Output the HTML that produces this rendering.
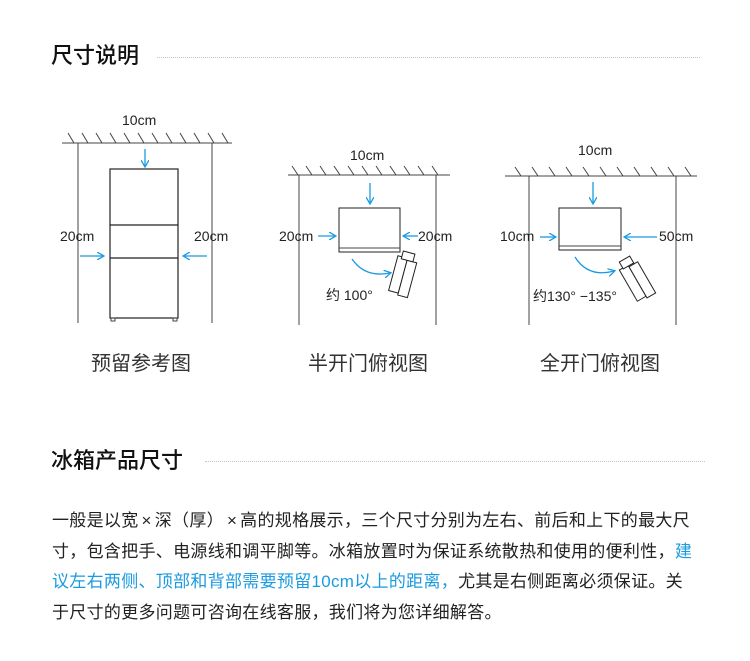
<!DOCTYPE html>
<html><head><meta charset="utf-8"><style>
body{margin:0;width:750px;height:661px;background:#fff;position:relative;overflow:hidden;font-family:"Liberation Sans","Noto Sans CJK SC",sans-serif;color:#222}
.h{position:absolute;left:51px;font-size:22px;line-height:26px;color:#111;font-weight:500}
.dl{position:absolute;height:0;border-top:1px dotted #c4c4c4}
.cap{position:absolute;font-size:20px;line-height:24px;color:#333;width:200px;text-align:center}
.p{position:absolute;left:52px;top:506px;font-size:17px;line-height:30.5px;color:#222;white-space:nowrap;letter-spacing:0.3px}
.b{color:#1a9ae0}
.x{margin:0 3px}
svg{position:absolute;left:0;top:0}
svg text{font-family:"Liberation Sans","Noto Sans CJK SC",sans-serif;font-size:14px;fill:#222}
</style></head><body>
<div class="h" style="top:43px">尺寸说明</div>
<div class="dl" style="left:157px;width:543px;top:57px"></div>
<svg width="750" height="340" viewBox="0 0 750 340">
<defs><marker id="a" markerWidth="8" markerHeight="8" refX="6" refY="4" orient="auto" markerUnits="userSpaceOnUse"><path d="M0,0 L7,4 L0,8" fill="none" stroke="#1a9ae0" stroke-width="1.3"/></marker></defs>
<g stroke="#444" stroke-width="1" fill="none">
<line x1="62" y1="143" x2="232" y2="143"/>
<path d="M68,133l6,10M82,133l6,10M96,133l6,10M110,133l6,10M124,133l6,10M138,133l6,10M152,133l6,10M166,133l6,10M180,133l6,10M194,133l6,10M208,133l6,10M222,133l6,10"/>
<line x1="78" y1="143" x2="78" y2="323"/><line x1="212" y1="143" x2="212" y2="323"/>
<rect x="110" y="169" width="68" height="149" fill="#fff" stroke="#222" stroke-width="1.2"/>
<line x1="110" y1="225" x2="178" y2="225" stroke="#222" stroke-width="1.2"/><line x1="110" y1="258" x2="178" y2="258" stroke="#222" stroke-width="1.2"/>
<rect x="111" y="318" width="4" height="3"/><rect x="173" y="318" width="4" height="3"/>
<line x1="288" y1="175" x2="450" y2="175"/>
<path d="M292,166l6,9M306,166l6,9M320,166l6,9M334,166l6,9M348,166l6,9M362,166l6,9M376,166l6,9M390,166l6,9M404,166l6,9M418,166l6,9M432,166l6,9"/>
<line x1="299" y1="175" x2="299" y2="325"/><line x1="436" y1="175" x2="436" y2="325"/>
<rect x="339" y="208" width="61" height="44" stroke="#222"/><line x1="339" y1="248" x2="400" y2="248"/>
<g transform="translate(405,268) rotate(15)" stroke="#222"><rect x="-10" y="-10" width="10" height="36" fill="#fff"/><rect x="0" y="-8" width="10" height="36" fill="#fff"/><rect x="-6" y="-16" width="12" height="8" fill="#fff"/></g>
<line x1="505" y1="176" x2="697" y2="176"/>
<path d="M515,167l6,9M532,167l6,9M549,167l6,9M566,167l6,9M583,167l6,9M600,167l6,9M617,167l6,9M634,167l6,9M651,167l6,9M668,167l6,9M685,167l6,9"/>
<line x1="529" y1="176" x2="529" y2="325"/><line x1="676" y1="176" x2="676" y2="325"/>
<rect x="559" y="208" width="62" height="42" stroke="#222"/><line x1="559" y1="246" x2="621" y2="246"/>
<g transform="translate(632,272) rotate(-30)" stroke="#222"><rect x="-10" y="-8" width="10" height="36" fill="#fff"/><rect x="0" y="-6" width="10" height="36" fill="#fff"/><rect x="-6" y="-15" width="12" height="8" fill="#fff"/></g>
</g>
<g stroke="#1a9ae0" stroke-width="1.3" fill="none" marker-end="url(#a)">
<line x1="145" y1="149" x2="145" y2="166"/>
<line x1="80" y1="256" x2="103" y2="256"/><line x1="207" y1="256" x2="184" y2="256"/>
<line x1="370" y1="183" x2="370" y2="203"/>
<line x1="318" y1="236" x2="335" y2="236"/><line x1="418" y1="236" x2="404" y2="236"/>
<path d="M352,259 Q365,278 390,273"/>
<line x1="593" y1="182" x2="593" y2="203"/>
<line x1="540" y1="237" x2="555" y2="237"/><line x1="657" y1="237" x2="625" y2="237"/>
<path d="M575,257 Q588,278 614,271"/>
</g>
<text x="122" y="125">10cm</text>
<text x="60" y="241">20cm</text><text x="194" y="241">20cm</text>
<text x="350" y="160">10cm</text>
<text x="279" y="241">20cm</text><text x="418" y="241">20cm</text>
<text x="326" y="300">约 100°</text>
<text x="578" y="155">10cm</text>
<text x="500" y="241">10cm</text><text x="659" y="241">50cm</text>
<text x="533" y="301">约130°  −135°</text>
</svg>
<div class="cap" style="left:41px;top:352px">预留参考图</div>
<div class="cap" style="left:268px;top:352px">半开门俯视图</div>
<div class="cap" style="left:500px;top:352px">全开门俯视图</div>
<div class="h" style="top:448px">冰箱产品尺寸</div>
<div class="dl" style="left:205px;width:500px;top:461px"></div>
<div class="p">一般是以宽<span class="x">×</span>深（厚）<span class="x">×</span>高的规格展示，三个尺寸分别为左右、前后和上下的最大尺<br>寸，包含把手、电源线和调平脚等。冰箱放置时为保证系统散热和使用的便利性，<span class="b">建</span><br><span class="b">议左右两侧、顶部和背部需要预留10cm以上的距离，</span>尤其是右侧距离必须保证。关<br>于尺寸的更多问题可咨询在线客服，我们将为您详细解答。</div>
</body></html>
